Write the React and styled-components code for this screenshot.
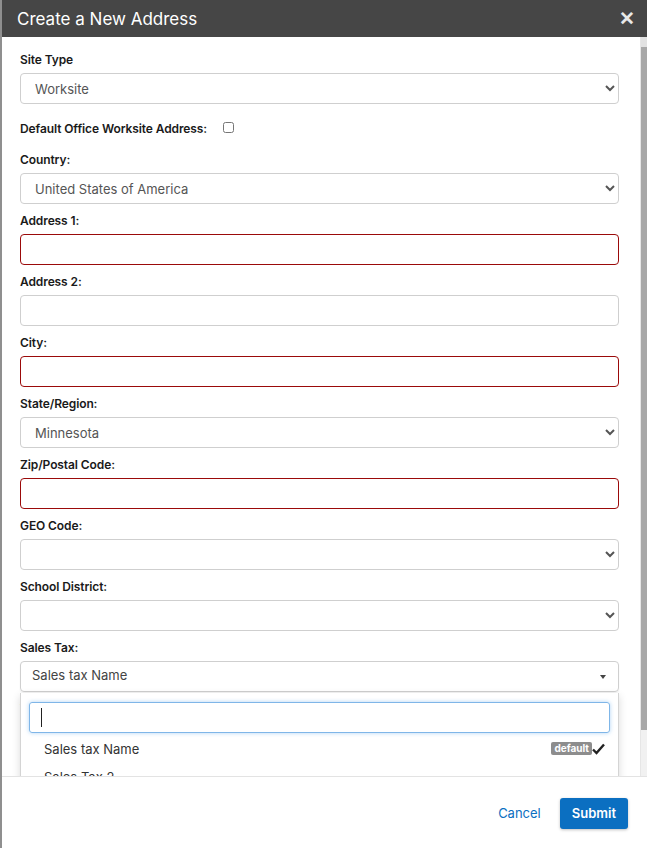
import React from 'react';
import styled, { createGlobalStyle } from 'styled-components';

const GlobalStyle = createGlobalStyle`
	html, body, #root {
		height: 100%;
	}
	body {
		margin: 0;
		background: #8f8f8f;
		font-family: Inter, 'Open Sans', Arial, sans-serif;
		overflow: hidden;
	}
`;

const Modal = styled.div`
	height: 100%;
	margin-left: 2px;
	background: #fff;
	display: flex;
	flex-direction: column;
`;

const Header = styled.div`
	height: 37px;
	flex: none;
	background: #464646;
	display: flex;
	align-items: center;
	justify-content: space-between;
	padding: 0 12px 0 15px;
`;

const Title = styled.h2`
	margin: 0;
	color: #fff;
	font-size: 17px;
	font-weight: 400;
`;

const Close = styled.button`
	border: 0;
	background: none;
	color: #e8e8e8;
	font-size: 19px;
	font-weight: 700;
	line-height: 1;
	padding: 0;
	cursor: pointer;
`;

const Body = styled.div`
	flex: 1;
	min-height: 0;
	display: flex;
`;

const Scroller = styled.div`
	flex: 1;
	overflow: hidden;
`;

// drawn scrollbar, as in the screenshot
const Track = styled.div`
	flex: none;
	width: 6px;
	display: flex;
	flex-direction: column;
	background: #f1f1f1;
	border-left: 1px solid #e6e6e6;
`;

const TrackButton = styled.div`
	height: 10px;
	background: #e2e2e2;
`;

const Thumb = styled.div`
	height: 683px;
	background: #a8a8a8;
`;

const Form = styled.form`
	padding: 14px 21px 0 18px;
`;

const Field = styled.div`
	position: relative;
	margin-bottom: 8px;
`;

const Label = styled.label`
	display: block;
	font-size: 12px;
	font-weight: 600;
	letter-spacing: -0.1px;
	line-height: 17px;
	color: #1a1a1a;
	margin-bottom: 5px;
`;

const Select = styled.select`
	display: block;
	width: 100%;
	height: 31px;
	padding: 0 10px;
	border: 1px solid #cfcfcf;
	border-radius: 4px;
	background: #fff;
	color: #555;
	font-family: inherit;
	font-size: 13px;
`;

const Input = styled.input`
	display: block;
	box-sizing: border-box;
	width: 100%;
	height: 31px;
	padding: 0 10px;
	border: 1px solid ${p => (p.$invalid ? '#9b0a0a' : '#cfcfcf')};
	border-radius: 4px;
	font-family: inherit;
	font-size: 13px;
`;

const CheckRow = styled.div`
	display: flex;
	align-items: center;
	gap: 16px;
	margin: 16px 0 14px;

	label {
		margin: 0;
	}
`;

const Check = styled.input`
	width: 11px;
	height: 11px;
	margin: 0 0 2px;
`;

const Select2 = styled.div`
	box-sizing: border-box;
	height: 31px;
	border: 1px solid #cfcfcf;
	border-radius: 4px;
	box-shadow: 0 1px 2px rgba(0, 0, 0, 0.06);
	display: flex;
	justify-content: space-between;
	padding: 5px 12px 0 11px;
	font-size: 13px;
	color: #444;
`;

const Caret = styled.span`
	margin-top: 8px;
	width: 0;
	height: 0;
	border-left: 3px solid transparent;
	border-right: 3px solid transparent;
	border-top: 4px solid #444;
`;

const Dropdown = styled.div`
	position: absolute;
	left: 0;
	right: 0;
	top: calc(100% + 1px);
	z-index: 2;
	background: #fff;
	border: 1px solid #d4d4d4;
	border-top: 0;
	box-shadow: 0 3px 8px rgba(0, 0, 0, 0.15);
	padding: 9px 8px 4px;
`;

const Search = styled.div`
	height: 31px;
	box-sizing: border-box;
	border: 1px solid #7fb6e8;
	border-radius: 3px;
	box-shadow: 0 0 4px rgba(82, 160, 230, 0.45);
	display: flex;
	align-items: center;
	padding-left: 11px;
`;

const TextCaret = styled.span`
	width: 1px;
	height: 19px;
	background: #222;
`;

const Option = styled.div`
	display: flex;
	align-items: center;
	justify-content: space-between;
	height: 25px;
	padding: 3px 5px 0 15px;
	font-size: 13px;
	color: #333;
`;

const Badge = styled.span`
	display: flex;
	align-items: center;
	font-size: 10px;
	font-weight: 700;
	color: #fff;

	span {
		background: #8d8d8d;
		border-radius: 2px;
		padding: 0 3px;
		line-height: 13px;
	}
`;

const Footer = styled.div`
	flex: none;
	height: 71px;
	border-top: 1px solid #e3e3e3;
	display: flex;
	align-items: center;
	justify-content: flex-end;
	gap: 10px;
	padding-right: 19px;
`;

const Button = styled.button`
	font-family: inherit;
	font-size: 13px;
	height: 31px;
	padding: 0 ${p => (p.$primary ? '12px' : '9px')};
	border-radius: 3px;
	border: 0;
	cursor: pointer;
	background: ${p => (p.$primary ? '#0b6fc1' : 'transparent')};
	color: ${p => (p.$primary ? '#fff' : '#0b6fc1')};
	font-weight: ${p => (p.$primary ? 600 : 400)};
	box-shadow: ${p => (p.$primary ? '0 1px 3px rgba(0,0,0,0.25)' : 'none')};
	margin-top: 1px;
`;

const fields = [
	{ label: 'Address 1:', invalid: true },
	{ label: 'Address 2:' },
	{ label: 'City:', invalid: true },
];

export default function App() {
	return (
		<>
			<GlobalStyle />
			<Modal>
				<Header>
					<Title>Create a New Address</Title>
					<Close aria-label='Close'>✕</Close>
				</Header>
				<Body>
					<Scroller>
						<Form>
							<Field>
								<Label>Site Type</Label>
								<Select defaultValue='Worksite'>
									<option>Worksite</option>
									<option>Office</option>
								</Select>
							</Field>
							<CheckRow>
								<Label>Default Office Worksite Address:</Label>
								<Check type='checkbox' />
							</CheckRow>
							<Field>
								<Label>Country:</Label>
								<Select>
									<option>United States of America</option>
								</Select>
							</Field>
							{fields.map(f => (
								<Field key={f.label}>
									<Label>{f.label}</Label>
									<Input $invalid={f.invalid} />
								</Field>
							))}
							<Field>
								<Label>State/Region:</Label>
								<Select>
									<option>Minnesota</option>
								</Select>
							</Field>
							<Field>
								<Label>Zip/Postal Code:</Label>
								<Input $invalid />
							</Field>
							<Field>
								<Label>GEO Code:</Label>
								<Select>
									<option></option>
								</Select>
							</Field>
							<Field>
								<Label>School District:</Label>
								<Select>
									<option></option>
								</Select>
							</Field>
							<Field>
								<Label>Sales Tax:</Label>
								<div style={{ position: 'relative' }}>
									<Select2>
										Sales tax Name
										<Caret />
									</Select2>
									<Dropdown>
										<Search>
											<TextCaret />
										</Search>
										<Option>
											Sales tax Name
											<Badge>
												<span>default</span>
												<svg width='13' height='12' viewBox='0 0 13 12'>
													<path d='M1 6.5 L4.5 10 L12 1.5' fill='none' stroke='#222' strokeWidth='2.4' />
												</svg>
											</Badge>
										</Option>
										<Option>Sales Tax 2</Option>
									</Dropdown>
								</div>
							</Field>
							<Field>
								<Label>Workers Comp Code:</Label>
								<Input />
							</Field>
						</Form>
					</Scroller>
					<Track>
						<TrackButton />
						<Thumb />
					</Track>
				</Body>
				<Footer>
					<Button>Cancel</Button>
					<Button $primary>Submit</Button>
				</Footer>
			</Modal>
		</>
	);
}
